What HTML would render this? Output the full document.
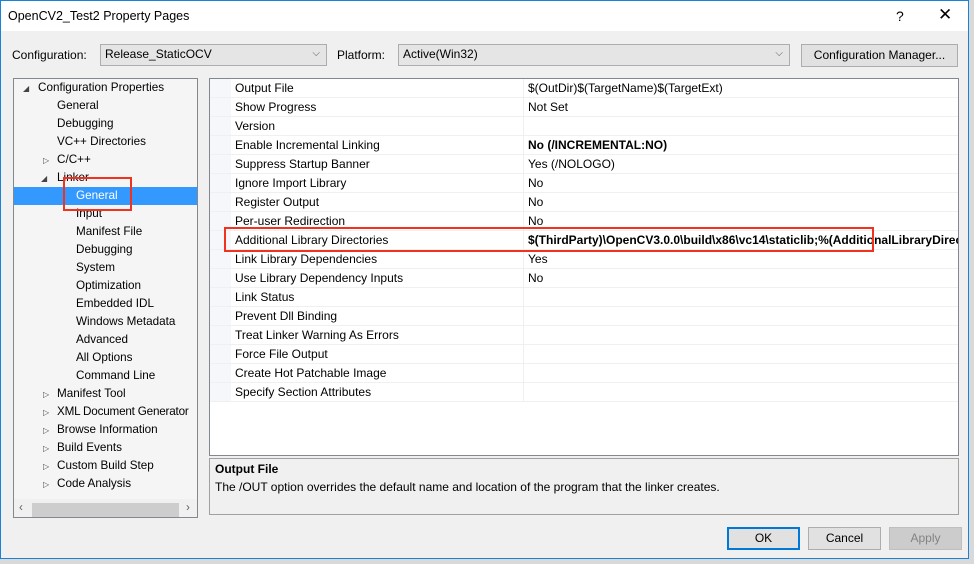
<!DOCTYPE html>
<html><head><meta charset="utf-8"><style>
*{box-sizing:border-box;margin:0;padding:0}
body{width:974px;height:564px;background:#d9d9d9;font-family:"Liberation Sans",sans-serif;font-size:12px;color:#000;position:relative;overflow:hidden}
.win{position:absolute;left:0;top:0;width:969px;height:559px;background:#f0f0f0;outline:1px solid #1883d7;outline-offset:-1px}
.title{position:absolute;left:1px;top:1px;width:967px;height:30px;background:#fff}
.a{position:absolute;white-space:nowrap}
.combo{position:absolute;height:22px;border:1px solid #adadad;background:#e5e5e5;padding:3px 4px}
.chev{position:absolute;right:6px;top:3px;color:#555;font-size:10px}
.btn{position:absolute;height:23px;border:1px solid #adadad;background:#e1e1e1;text-align:center;line-height:21px}
.tree{position:absolute;left:13px;top:78px;width:185px;height:440px;border:1px solid #828790;background:#f5f5f5;overflow:hidden;font-size:11.7px}
.tr{position:absolute;height:18px;line-height:18px;white-space:nowrap}
.tri{position:absolute;font-size:8px;color:#444}
.grid{position:absolute;left:209px;top:78px;width:750px;height:378px;border:1px solid #828790;background:#fff;overflow:hidden}
.row{position:absolute;left:0;width:748px;height:19px;line-height:18px;border-bottom:1px solid #f0f0f0}
.row .n{position:absolute;left:25px}
.row .v{position:absolute;left:318px;white-space:nowrap}
.desc{position:absolute;left:209px;top:458px;width:750px;height:57px;border:1px solid #a0a0a0;background:#f0f0f0;padding:3px 5px}
</style></head><body>
<div class="win">
<div class="title"></div>
<div class="a" style="left:8px;top:9px;font-size:12.5px">OpenCV2_Test2 Property Pages</div>
<div class="a" style="left:896px;top:8px;font-size:14px">?</div>
<div class="a" style="left:938px;top:5px;font-size:17px">✕</div>

<div class="a" style="left:12px;top:48px">Configuration:</div>
<div class="combo" style="left:100px;top:44px;width:227px;padding-top:2px">Release_StaticOCV<span class="chev">⌵</span></div>
<div class="a" style="left:337px;top:48px">Platform:</div>
<div class="combo" style="left:398px;top:44px;width:392px;padding-top:2px">Active(Win32)<span class="chev">⌵</span></div>
<div class="btn" style="left:801px;top:44px;width:157px;height:23px">Configuration Manager...</div>

<div class="tree">
<div class="tri" style="left:9px;top:5px">◢</div><div class="tr" style="left:24px;top:0">Configuration Properties</div>
<div class="tr" style="left:43px;top:18px">General</div>
<div class="tr" style="left:43px;top:36px">Debugging</div>
<div class="tr" style="left:43px;top:54px">VC++ Directories</div>
<div class="tri" style="left:29px;top:77px">▷</div><div class="tr" style="left:43px;top:72px">C/C++</div>
<div class="tri" style="left:27px;top:95px">◢</div><div class="tr" style="left:43px;top:90px">Linker</div>
<div style="position:absolute;left:0;top:108px;width:183px;height:18px;background:#3399ff"></div>
<div class="tr" style="left:62px;top:108px;color:#fff">General</div>
<div class="tr" style="left:62px;top:126px">Input</div>
<div class="tr" style="left:62px;top:144px">Manifest File</div>
<div class="tr" style="left:62px;top:162px">Debugging</div>
<div class="tr" style="left:62px;top:180px">System</div>
<div class="tr" style="left:62px;top:198px">Optimization</div>
<div class="tr" style="left:62px;top:216px">Embedded IDL</div>
<div class="tr" style="left:62px;top:234px">Windows Metadata</div>
<div class="tr" style="left:62px;top:252px">Advanced</div>
<div class="tr" style="left:62px;top:270px">All Options</div>
<div class="tr" style="left:62px;top:288px">Command Line</div>
<div class="tri" style="left:29px;top:311px">▷</div><div class="tr" style="left:43px;top:306px">Manifest Tool</div>
<div class="tri" style="left:29px;top:329px">▷</div><div class="tr" style="left:43px;top:324px;letter-spacing:-0.2px">XML Document Generator</div>
<div class="tri" style="left:29px;top:347px">▷</div><div class="tr" style="left:43px;top:342px">Browse Information</div>
<div class="tri" style="left:29px;top:365px">▷</div><div class="tr" style="left:43px;top:360px">Build Events</div>
<div class="tri" style="left:29px;top:383px">▷</div><div class="tr" style="left:43px;top:378px">Custom Build Step</div>
<div class="tri" style="left:29px;top:401px">▷</div><div class="tr" style="left:43px;top:396px">Code Analysis</div>
<div style="position:absolute;left:0;top:420px;width:183px;height:18px;background:#f0f0f0"></div>
<div style="position:absolute;left:18px;top:424px;width:147px;height:14px;background:#cdcdcd"></div>
<div class="tr" style="left:5px;top:420px;color:#606060">‹</div>
<div class="tr" style="left:172px;top:420px;color:#606060">›</div>
</div>
<div style="position:absolute;left:63px;top:177px;width:69px;height:34px;border:2px solid #f0321e"></div>

<div class="grid">
<div style="position:absolute;left:0;top:0;width:21px;height:323px;background:#f5f7fb"></div>
<div style="position:absolute;left:313px;top:0;width:1px;height:323px;background:#f0f0f0"></div>
<div class="row" style="top:0"><span class="n">Output File</span><span class="v">$(OutDir)$(TargetName)$(TargetExt)</span></div>
<div class="row" style="top:19px"><span class="n">Show Progress</span><span class="v">Not Set</span></div>
<div class="row" style="top:38px"><span class="n">Version</span><span class="v"></span></div>
<div class="row" style="top:57px"><span class="n">Enable Incremental Linking</span><span class="v"><b>No (/INCREMENTAL:NO)</b></span></div>
<div class="row" style="top:76px"><span class="n">Suppress Startup Banner</span><span class="v">Yes (/NOLOGO)</span></div>
<div class="row" style="top:95px"><span class="n">Ignore Import Library</span><span class="v">No</span></div>
<div class="row" style="top:114px"><span class="n">Register Output</span><span class="v">No</span></div>
<div class="row" style="top:133px"><span class="n">Per-user Redirection</span><span class="v">No</span></div>
<div class="row" style="top:152px"><span class="n">Additional Library Directories</span><span class="v"><b>$(ThirdParty)\OpenCV3.0.0\build\x86\vc14\staticlib;%(AdditionalLibraryDirectories)</b></span></div>
<div class="row" style="top:171px"><span class="n">Link Library Dependencies</span><span class="v">Yes</span></div>
<div class="row" style="top:190px"><span class="n">Use Library Dependency Inputs</span><span class="v">No</span></div>
<div class="row" style="top:209px"><span class="n">Link Status</span><span class="v"></span></div>
<div class="row" style="top:228px"><span class="n">Prevent Dll Binding</span><span class="v"></span></div>
<div class="row" style="top:247px"><span class="n">Treat Linker Warning As Errors</span><span class="v"></span></div>
<div class="row" style="top:266px"><span class="n">Force File Output</span><span class="v"></span></div>
<div class="row" style="top:285px"><span class="n">Create Hot Patchable Image</span><span class="v"></span></div>
<div class="row" style="top:304px"><span class="n">Specify Section Attributes</span><span class="v"></span></div>
</div>
<div style="position:absolute;left:224px;top:227px;width:650px;height:25px;border:2px solid #f0321e"></div>

<div class="desc"><b>Output File</b><div style="margin-top:4px">The /OUT option overrides the default name and location of the program that the linker creates.</div></div>

<div class="btn" style="left:727px;top:527px;width:73px;border:2px solid #0078d7;line-height:19px">OK</div>
<div class="btn" style="left:808px;top:527px;width:73px">Cancel</div>
<div class="btn" style="left:889px;top:527px;width:73px;background:#cccccc;border-color:#bfbfbf;color:#838383">Apply</div>
</div>
</body></html>
